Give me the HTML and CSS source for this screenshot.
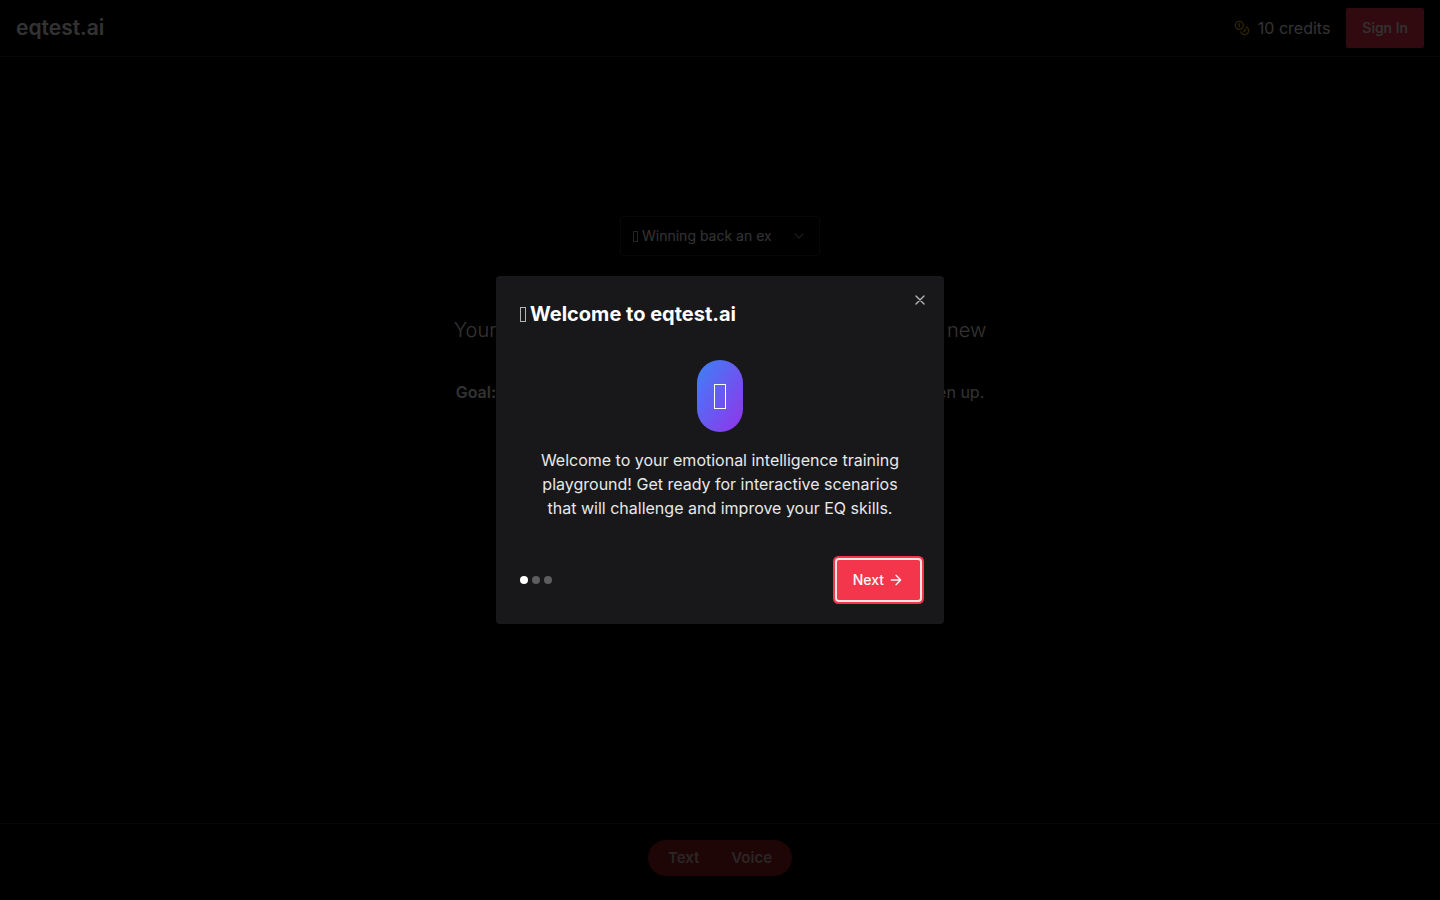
FILE: index.html
```html
<!DOCTYPE html>
<html lang="en">
<head>
<meta charset="utf-8">
<meta name="viewport" content="width=device-width, initial-scale=1">
<title>eqtest.ai</title>
<link rel="stylesheet" href="styles.css">
</head>
<body>
<div class="app">
  <header class="topbar">
    <a class="brand" href="#">eqtest.ai</a>
    <div class="account">
      <span class="credits">
        <svg class="icon coins" viewBox="0 0 24 24" aria-hidden="true"><circle cx="8" cy="8" r="6"/><path d="M18.09 10.37A6 6 0 1 1 10.34 18"/><path d="M7 6h1v4"/><path d="m16.71 13.88.7.71-2.82 2.82"/></svg>
        <span>10 credits</span>
      </span>
      <button class="button" type="button">Sign In</button>
    </div>
  </header>
  <main class="scenario">
    <div class="picker">
      <select class="picker-select" aria-label="Scenario"><option>Winning back an ex</option></select>
      <span class="glyph glyph-small"></span>
      <svg class="icon chevron" viewBox="0 0 24 24" aria-hidden="true"><path d="m6 9 6 6 6-6"/></svg>
    </div>
    <p class="situation">Your ex just texted you that they are dating someone new</p>
    <p class="goal"><strong>Goal:</strong> Convince your ex to give you another chance and then open up.</p>
  </main>
  <footer class="bottombar">
    <div class="modes">
      <button class="mode" type="button">Text</button>
      <button class="mode" type="button">Voice</button>
    </div>
  </footer>
</div>
<div class="overlay">
  <section class="dialog" role="dialog" aria-modal="true" aria-labelledby="dialog-title">
    <button class="close" type="button" aria-label="Close">
      <svg class="icon" viewBox="0 0 24 24" aria-hidden="true"><path d="M18 6 6 18M6 6l12 12"/></svg>
    </button>
    <h2 class="dialog-title" id="dialog-title"><span class="glyph glyph-medium"></span>Welcome to eqtest.ai</h2>
    <div class="intro">
      <div class="badge"><span class="glyph glyph-large"></span></div>
      <p class="message">Welcome to your emotional intelligence training playground! Get ready for interactive scenarios that will challenge and improve your EQ skills.</p>
    </div>
    <div class="actions">
      <div class="dots"><span class="dot dot-active"></span><span class="dot"></span><span class="dot"></span></div>
      <button class="button next" type="button">Next
        <svg class="icon" viewBox="0 0 24 24" aria-hidden="true"><path d="M5 12h14M12 5l7 7-7 7"/></svg>
      </button>
    </div>
  </section>
</div>
</body>
</html>
```
FILE: styles.css
```css
* { box-sizing: border-box; }
body {
  margin: 0;
  background: #000;
  color: #fafafa;
  font: 16px/24px Inter, sans-serif;
}
button, select { font: inherit; color: inherit; border: 0; }
p, h2 { margin: 0; }
.icon {
  width: 16px;
  height: 16px;
  flex: none;
  fill: none;
  stroke: currentColor;
  stroke-width: 2;
  stroke-linecap: round;
  stroke-linejoin: round;
}
/* Outlined box drawn in front of a label */
.glyph { flex: none; border: 1px solid #b4b4b5; }
.glyph-small { width: 5px; height: 11px; }
.glyph-medium { width: 6px; height: 15px; }
.glyph-large { width: 12px; height: 25px; border-color: #fff; }

.app { min-height: 100vh; display: flex; flex-direction: column; padding-bottom: 4px; }
.topbar {
  display: flex;
  align-items: center;
  justify-content: space-between;
  padding: 8px 16px;
  border-bottom: 1px solid #27272a;
}
.brand { color: inherit; text-decoration: none; font-size: 21px; line-height: 28px; font-weight: 600; }
.account { display: flex; align-items: center; gap: 16px; }
.credits { display: flex; align-items: center; gap: 8px; }
.coins { color: #eab308; }
.button {
  display: flex;
  align-items: center;
  gap: 4px;
  height: 40px;
  padding: 0 16px;
  border-radius: 2px;
  background: #f4364c;
  font-size: 14px;
  line-height: 20px;
  font-weight: 500;
}
.scenario {
  flex: 1;
  display: flex;
  flex-direction: column;
  align-items: center;
  padding: 159px 16px 32px;
  text-align: center;
}
.picker { display: grid; align-items: center; width: 200px; }
.picker > * { grid-area: 1 / 1; }
.picker-select {
  appearance: none;
  width: 100%;
  height: 40px;
  padding: 0 32px 0 21px;
  border: 1px solid #27272a;
  border-radius: 2px;
  background: #000;
  font-size: 14px;
}
.picker .glyph { margin-left: 13px; pointer-events: none; }
.chevron { justify-self: end; margin-right: 13px; opacity: .5; pointer-events: none; }
.situation { margin-top: 60px; font-size: 20px; line-height: 28px; font-weight: 300; }
.goal { margin-top: 36px; }
.goal strong { font-weight: 600; }
.bottombar { display: flex; justify-content: center; padding: 16px 16px 20px; border-top: 1px solid #27272a; }
.modes { display: flex; padding: 0 4px; border-radius: 18px; background: #961b20; }
.mode { height: 36px; padding: 0 16px; background: none; color: #d4bcbc; font-size: 15px; font-weight: 600; }
.overlay {
  position: fixed;
  inset: 0;
  display: grid;
  place-items: center;
  background: rgba(0, 0, 0, .8);
}
.dialog {
  position: relative;
  width: 448px;
  max-width: 100%;
  padding: 24px;
  border-radius: 4px;
  background: #18181b;
}
.close { position: absolute; top: 16px; right: 16px; display: flex; padding: 0; background: none; opacity: .7; }
.dialog-title {
  display: flex;
  align-items: center;
  gap: 4px;
  color: #fff;
  font-size: 20px;
  line-height: 28px;
  font-weight: 700;
}
.intro {
  display: flex;
  flex-direction: column;
  align-items: center;
  gap: 16px;
  padding: 32px 8px 40px;
  text-align: center;
}
.badge {
  display: grid;
  place-items: center;
  width: 46px;
  height: 72px;
  border-radius: 23px;
  background: linear-gradient(to bottom right, #3b82f6, #9333ea);
}
.message { color: #e8e8e8; }
.actions { display: flex; align-items: center; justify-content: space-between; }
.next { box-shadow: 0 0 0 2px #ffe4e6, 0 0 0 4px #f4364c; }
.dots { display: flex; gap: 4px; }
.dot { width: 8px; height: 8px; border-radius: 50%; background: #5d5d5f; }
.dot-active { background: #fff; }
```
